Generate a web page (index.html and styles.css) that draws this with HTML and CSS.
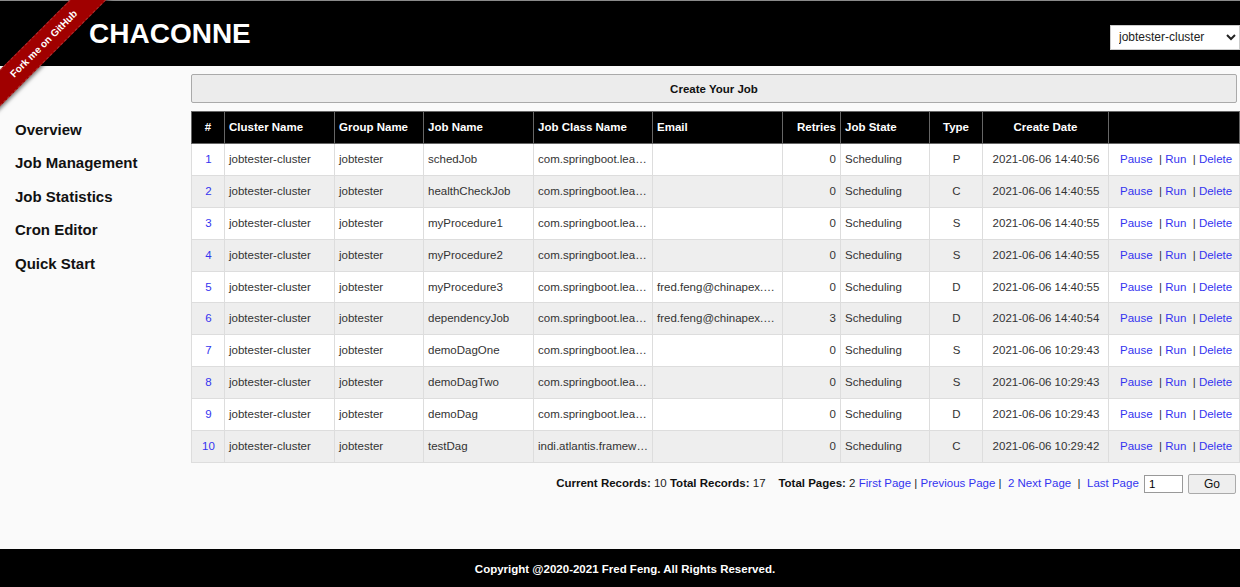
FILE: index.html
```html
<!DOCTYPE html>
<html>
<head>
<meta charset="utf-8">
<title>Chaconne</title>
<link rel="stylesheet" href="styles.css">
</head>
<body>
<div class="page">
  <header class="topbar">
    <h1 class="brand">CHACONNE</h1>
    <select class="cluster-select">
      <option>jobtester-cluster</option>
    </select>
  </header>
  <div class="ribbon-wrap"><a class="ribbon" href="#">Fork me on GitHub</a></div>
  <div class="body">
    <nav class="sidebar">
      <a class="nav-item" href="#">Overview</a>
      <a class="nav-item" href="#">Job Management</a>
      <a class="nav-item" href="#">Job Statistics</a>
      <a class="nav-item" href="#">Cron Editor</a>
      <a class="nav-item" href="#">Quick Start</a>
    </nav>
    <main class="main">
      <button class="create-btn">Create Your Job</button>
      <table class="jobs">
        <colgroup>
          <col class="c-num"><col class="c-cluster"><col class="c-group"><col class="c-job"><col class="c-class"><col class="c-email"><col class="c-retries"><col class="c-state"><col class="c-type"><col class="c-date"><col class="c-act">
        </colgroup>
        <thead>
          <tr>
            <th class="center">#</th>
            <th>Cluster Name</th>
            <th>Group Name</th>
            <th>Job Name</th>
            <th>Job Class Name</th>
            <th>Email</th>
            <th class="right">Retries</th>
            <th>Job State</th>
            <th class="center">Type</th>
            <th class="center">Create Date</th>
            <th></th>
          </tr>
        </thead>
        <tbody>
          <tr><td class="center"><a href="#">1</a></td><td>jobtester-cluster</td><td>jobtester</td><td>schedJob</td><td class="ell">com.springboot.learning.jobs.SchedJob</td><td class="ell"></td><td class="right">0</td><td>Scheduling</td><td class="center">P</td><td class="center">2021-06-06 14:40:56</td><td class="acts"><a href="#">Pause</a> &nbsp;| <a href="#">Run</a> &nbsp;| <a href="#">Delete</a></td></tr>
          <tr><td class="center"><a href="#">2</a></td><td>jobtester-cluster</td><td>jobtester</td><td>healthCheckJob</td><td class="ell">com.springboot.learning.jobs.HealthCheckJob</td><td class="ell"></td><td class="right">0</td><td>Scheduling</td><td class="center">C</td><td class="center">2021-06-06 14:40:55</td><td class="acts"><a href="#">Pause</a> &nbsp;| <a href="#">Run</a> &nbsp;| <a href="#">Delete</a></td></tr>
          <tr><td class="center"><a href="#">3</a></td><td>jobtester-cluster</td><td>jobtester</td><td>myProcedure1</td><td class="ell">com.springboot.learning.jobs.MyProcedure1</td><td class="ell"></td><td class="right">0</td><td>Scheduling</td><td class="center">S</td><td class="center">2021-06-06 14:40:55</td><td class="acts"><a href="#">Pause</a> &nbsp;| <a href="#">Run</a> &nbsp;| <a href="#">Delete</a></td></tr>
          <tr><td class="center"><a href="#">4</a></td><td>jobtester-cluster</td><td>jobtester</td><td>myProcedure2</td><td class="ell">com.springboot.learning.jobs.MyProcedure2</td><td class="ell"></td><td class="right">0</td><td>Scheduling</td><td class="center">S</td><td class="center">2021-06-06 14:40:55</td><td class="acts"><a href="#">Pause</a> &nbsp;| <a href="#">Run</a> &nbsp;| <a href="#">Delete</a></td></tr>
          <tr><td class="center"><a href="#">5</a></td><td>jobtester-cluster</td><td>jobtester</td><td>myProcedure3</td><td class="ell">com.springboot.learning.jobs.MyProcedure3</td><td class="ell">fred.feng@chinapex.com.cn</td><td class="right">0</td><td>Scheduling</td><td class="center">D</td><td class="center">2021-06-06 14:40:55</td><td class="acts"><a href="#">Pause</a> &nbsp;| <a href="#">Run</a> &nbsp;| <a href="#">Delete</a></td></tr>
          <tr><td class="center"><a href="#">6</a></td><td>jobtester-cluster</td><td>jobtester</td><td>dependencyJob</td><td class="ell">com.springboot.learning.jobs.DependencyJob</td><td class="ell">fred.feng@chinapex.com.cn</td><td class="right">3</td><td>Scheduling</td><td class="center">D</td><td class="center">2021-06-06 14:40:54</td><td class="acts"><a href="#">Pause</a> &nbsp;| <a href="#">Run</a> &nbsp;| <a href="#">Delete</a></td></tr>
          <tr><td class="center"><a href="#">7</a></td><td>jobtester-cluster</td><td>jobtester</td><td>demoDagOne</td><td class="ell">com.springboot.learning.jobs.DemoDagOne</td><td class="ell"></td><td class="right">0</td><td>Scheduling</td><td class="center">S</td><td class="center">2021-06-06 10:29:43</td><td class="acts"><a href="#">Pause</a> &nbsp;| <a href="#">Run</a> &nbsp;| <a href="#">Delete</a></td></tr>
          <tr><td class="center"><a href="#">8</a></td><td>jobtester-cluster</td><td>jobtester</td><td>demoDagTwo</td><td class="ell">com.springboot.learning.jobs.DemoDagTwo</td><td class="ell"></td><td class="right">0</td><td>Scheduling</td><td class="center">S</td><td class="center">2021-06-06 10:29:43</td><td class="acts"><a href="#">Pause</a> &nbsp;| <a href="#">Run</a> &nbsp;| <a href="#">Delete</a></td></tr>
          <tr><td class="center"><a href="#">9</a></td><td>jobtester-cluster</td><td>jobtester</td><td>demoDag</td><td class="ell">com.springboot.learning.jobs.DemoDag</td><td class="ell"></td><td class="right">0</td><td>Scheduling</td><td class="center">D</td><td class="center">2021-06-06 10:29:43</td><td class="acts"><a href="#">Pause</a> &nbsp;| <a href="#">Run</a> &nbsp;| <a href="#">Delete</a></td></tr>
          <tr><td class="center"><a href="#">10</a></td><td>jobtester-cluster</td><td>jobtester</td><td>testDag</td><td class="ell">indi.atlantis.framework.chaconne.TestDag</td><td class="ell"></td><td class="right">0</td><td>Scheduling</td><td class="center">C</td><td class="center">2021-06-06 10:29:42</td><td class="acts"><a href="#">Pause</a> &nbsp;| <a href="#">Run</a> &nbsp;| <a href="#">Delete</a></td></tr>
        </tbody>
      </table>
      <div class="pager"><b>Current Records:</b> 10 <b>Total Records:</b> 17 &nbsp;&nbsp; <b>Total Pages:</b> 2 <a href="#">First Page</a> | <a href="#">Previous Page</a> | &nbsp;<a href="#">2</a> <a href="#">Next Page</a> &nbsp;| &nbsp;<a href="#">Last Page</a> <input class="page-input" type="text" value="1"><button class="go-btn">Go</button></div>
    </main>
  </div>
  <footer class="footer">Copyright @2020-2021 Fred Feng. All Rights Reserved.</footer>
</div>
</body>
</html>
```

FILE: styles.css
```css
* { box-sizing: border-box; }
html, body { margin: 0; padding: 0; }
body {
  font-family: "Liberation Sans", Arial, sans-serif;
  background: #fafafa;
  color: #333;
}
a { color: #3434f0; text-decoration: none; }

.page {
  min-height: 100vh;
  display: flex;
  flex-direction: column;
  position: relative;
}

.topbar {
  height: 66px;
  background: #000;
  border-top: 1px solid #8a8a8a;
  display: flex;
  align-items: center;
  justify-content: space-between;
  padding-left: 89px;
}
.brand {
  margin: 0;
  color: #fff;
  font-size: 28px;
  font-weight: bold;
  line-height: 1;
}
.cluster-select {
  width: 130px;
  height: 25px;
  font-family: "Liberation Sans", Arial, sans-serif;
  font-size: 12px;
  color: #222;
  background: #fff;
  border: 1px solid #ccc;
  border-radius: 0;
  padding: 0 4px;
  margin-top: 7px;
}

.ribbon-wrap {
  position: absolute;
  top: 0;
  left: 0;
  width: 130px;
  height: 130px;
  overflow: hidden;
  pointer-events: none;
}
.ribbon {
  position: absolute;
  width: 200px;
  height: 26px;
  left: -56px;
  top: 31px;
  transform: rotate(-45deg);
  background: #a00000;
  color: #fff;
  font-size: 10px;
  font-weight: bold;
  line-height: 24px;
  text-align: center;
  box-shadow: 0 2px 4px rgba(0,0,0,0.5);
  border-top: 1px dashed rgba(255,255,255,0.2);
  border-bottom: 1px dashed rgba(255,255,255,0.2);
  pointer-events: auto;
}

.body {
  flex: 1;
  display: flex;
}
.sidebar {
  width: 191px;
  flex: none;
  padding: 47px 0 0 15px;
  display: flex;
  flex-direction: column;
}
.nav-item {
  color: #111;
  font-size: 15px;
  font-weight: bold;
  line-height: 18px;
  padding: 7.75px 0;
}

.main {
  flex: 1;
  padding: 8px 1px 0 0;
  min-width: 0;
}
.create-btn {
  display: block;
  width: calc(100% - 2px);
  height: 29px;
  background: #ececec;
  border: 1px solid #aaa;
  border-radius: 2px;
  font-family: "Liberation Sans", Arial, sans-serif;
  font-size: 11.5px;
  font-weight: bold;
  color: #111;
  margin: 0 0 8px 0;
}

.jobs {
  width: 100%;
  table-layout: fixed;
  border-collapse: collapse;
  font-size: 11.5px;
  border: 1px solid #bbb;
}
.c-num { width: 33px; }
.c-cluster { width: 110px; }
.c-group { width: 89px; }
.c-job { width: 110px; }
.c-class { width: 119px; }
.c-email { width: 130px; }
.c-retries { width: 58px; }
.c-state { width: 89px; }
.c-type { width: 53px; }
.c-date { width: 126px; }
.c-act { width: 131px; }

.jobs th {
  background: #000;
  color: #fff;
  font-weight: bold;
  height: 32px;
  text-align: left;
  padding: 0 4px 2px 4px;
  border: 1px solid #666;
}
.jobs td {
  height: 31.9px;
  padding: 0 3px 1px 4px;
  border: 1px solid #ddd;
  white-space: nowrap;
  color: #333;
}
.jobs tbody tr:nth-child(odd) td { background: #fff; }
.jobs tbody tr:nth-child(even) td { background: #eee; }
.jobs .center { text-align: center; }
.jobs .right { text-align: right; padding-right: 4px; }
.jobs .ell { overflow: hidden; text-overflow: ellipsis; }
.jobs .acts { padding-left: 11px; color: #333; }

.pager {
  text-align: right;
  font-size: 11.5px;
  line-height: 20px;
  color: #222;
  margin-top: 10px;
  padding-right: 3px;
  white-space: nowrap;
}
.pager b { color: #111; }
.page-input {
  width: 39px;
  height: 18px;
  margin-left: 2px;
  border: 1px solid #999;
  font-family: "Liberation Sans", Arial, sans-serif;
  font-size: 11.5px;
  padding: 0 4px;
  vertical-align: middle;
}
.go-btn {
  width: 48px;
  height: 20px;
  margin-left: 5px;
  border: 1px solid #aaa;
  border-radius: 2px;
  background: #eee;
  font-family: "Liberation Sans", Arial, sans-serif;
  font-size: 12px;
  color: #111;
  vertical-align: middle;
}

.footer {
  height: 38px;
  background: #000;
  color: #fff;
  font-size: 11.5px;
  font-weight: bold;
  display: flex;
  align-items: center;
  justify-content: center;
  padding-top: 2px;
  padding-left: 10px;
}
```
